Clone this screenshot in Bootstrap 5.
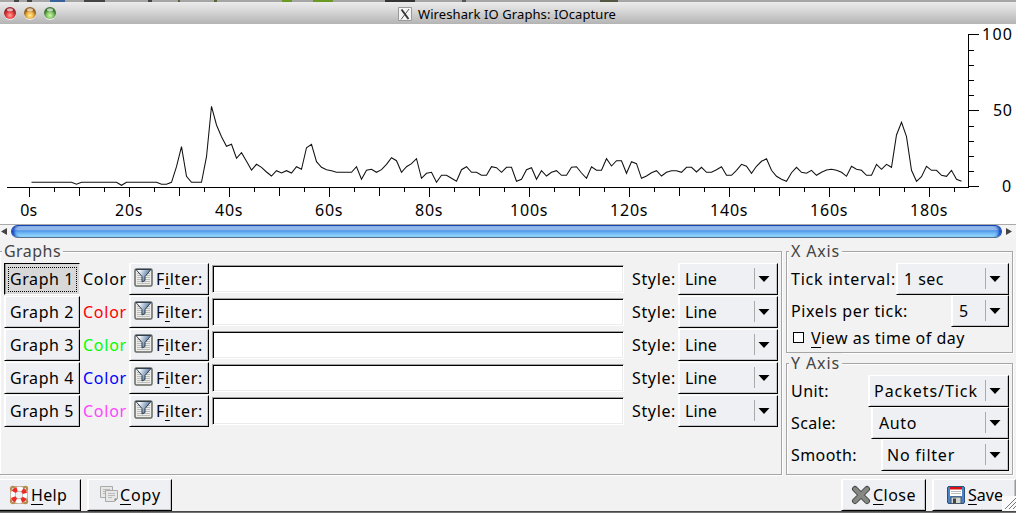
<!DOCTYPE html>
<html lang="en">
<head>
<meta charset="utf-8">
<title>Wireshark IO Graphs: IOcapture</title>
<link rel="stylesheet" href="https://cdn.jsdelivr.net/npm/bootstrap@5.3.0/dist/css/bootstrap.min.css">
<style>
body{width:1016px;height:513px;overflow:hidden;background:#f2f2f2;color:#000;font:16px/20px "Noto Sans","Open Sans",sans-serif}
.strip{height:2px;background:linear-gradient(90deg,#a6a6a6 0 14px,#444 14px 19px,#a6a6a6 19px 27px,#444 27px 32px,#a6a6a6 32px 50px,#38629c 50px 65px,#a6a6a6 65px 84px,#444 84px 105px,#a6a6a6 105px 148px,#444 148px 152px,#a6a6a6 152px 178px,#563 178px 180px,#a6a6a6 180px 214px,#563 214px 217px,#a6a6a6 217px 282px,#6a9a22 282px 292px,#a6a6a6 292px 313px,#6a9a22 313px 333px,#a6a6a6 333px 385px,#333 385px 415px,#a6a6a6 415px 462px,#555 462px 466px,#a6a6a6 466px 600px,#554 600px 618px,#a6a6a6 618px)}
.titlebar{height:22px;background:linear-gradient(#ececec,#d4d4d4 45%,#b4b4b4);font-size:13px}
.lights{position:absolute;left:3px;top:4px}
.thumb-bar{height:14px;background:#f4f4f4;border-top:1px solid #aaa}
.thumb{width:991px;height:13px;border-radius:7px;border:1px solid #1746b4;border-bottom-color:#55708c;background:linear-gradient(#93b9ea 0 38%,#4c92e8 42%,#6db4f4 62%,#9be0ff);box-shadow:inset 4px 0 3px -2px #0b3cb8,inset -4px 0 3px -2px #0b3cb8}
.pane{height:236px}
.group{position:relative;border:1px solid #a5a5a5;box-shadow:1px 1px #fff,inset 1px 1px #fff}
.group-name{position:absolute;left:2px;top:-11px;height:20px;padding:0 2px;background:#f2f2f2;color:#444}
.graphs{width:782px;height:224px;margin-top:13px;border-left:0;padding:11px 0 0 4px}
.graphs .group-name{left:2px}
.side{width:227px;margin:13px 0 0 4px}
.xaxis{height:102px;padding:11px 0 0 4px}
.yaxis{height:112px;margin-top:10px;padding:11px 0 0 4px}
.key{height:32px;background:#eff0f3;border:solid;border-width:1px;border-color:#fff #000 #000 #fff;box-shadow:inset 1px 0 #fff,inset -1px -1px #c4c6ca;white-space:nowrap}
.key.down{background:#d8d8d8;border-color:#000 #eee #fff #000;box-shadow:inset 1px 0 #999}
.focusbox{border:1px dotted #000;width:69px;height:25px}
.graph-row{display:grid;grid-template-columns:76px 49px 80px 3px 412px 54px 100px;height:33px}
.entry{height:28px;margin-top:2px;border:solid;border-width:1px;border-color:#a0a0a0 #fff #fff #a0a0a0;background:#fff;box-shadow:inset 1px 1px #000,inset -1px -1px #ececec}
.pick{position:relative;padding:5px 0 0 7px}
.pick svg{position:absolute;right:7px;top:4px}
.field-row{height:32px;padding-right:3px}
.check{width:11px;height:11px;border:1px solid #000;background:#fff}
.fit{display:inline-block;white-space:pre;text-align:left;line-height:20px}
u{text-underline-offset:3px;text-decoration-thickness:1px}
.actions{height:37px;padding-top:5px}
.grip{position:absolute;right:0;bottom:2px}
.floor{height:2px;background:linear-gradient(#333,#888)}
</style>
</head>
<body class="d-flex flex-column position-relative">
<div class="strip flex-shrink-0"></div>
<header class="titlebar position-relative flex-shrink-0">
<svg class="lights" width="60" height="16"><defs>
<radialGradient id="r" cy=".7"><stop stop-color="#ffa9a5"/><stop offset=".55" stop-color="#f04748"/><stop offset="1" stop-color="#97272c"/></radialGradient>
<radialGradient id="y" cy=".7"><stop stop-color="#fff29a"/><stop offset=".55" stop-color="#f2b447"/><stop offset="1" stop-color="#93601f"/></radialGradient>
<radialGradient id="g" cy=".7"><stop stop-color="#d4f7a8"/><stop offset=".55" stop-color="#86c96a"/><stop offset="1" stop-color="#3c7631"/></radialGradient></defs>
<g fill="#eee"><circle cx="7" cy="8" r="6"/><circle cx="27" cy="8" r="6"/><circle cx="47" cy="8" r="6"/></g>
<circle cx="7" cy="7" r="6" fill="url(#r)"/><circle cx="27" cy="7" r="6" fill="url(#y)"/><circle cx="47" cy="7" r="6" fill="url(#g)"/>
<g fill="#fff" opacity=".65"><ellipse cx="7" cy="3.7" rx="3" ry="1.5"/><ellipse cx="27" cy="3.7" rx="3" ry="1.5"/><ellipse cx="47" cy="3.7" rx="3" ry="1.5"/></g></svg>
<div class="d-flex align-items-center h-100" style="padding-left:398px;padding-top:1px">
<svg width="14" height="14"><path d="M.5.5h13v13H.5z" fill="#f5f5f5" stroke="#999"/><path d="M3.500 2.500 10.500 12" stroke="#333" stroke-width="1.900"/><path d="M11 2 3 12.500" stroke="#444" stroke-width=".9"/></svg>
<span class="fit" data-w="198" style="margin-left:6px">Wireshark IO Graphs: IOcapture</span></div>
</header>
<svg id="chart" class="bg-white flex-shrink-0" width="1016" height="200" viewBox="0 24 1016 200"></svg>
<div class="thumb-bar d-flex align-items-center flex-shrink-0"><svg width="11" height="13"><path d="M7 3v7L1 6.500z" fill="#444"/></svg><div class="thumb"></div><svg width="14" height="13"><path d="M4 3v7l6-3.500z" fill="#444"/></svg></div>
<main class="pane d-flex flex-shrink-0">
<section class="group graphs"><div class="group-name"><span class="fit" data-w="57">Graphs</span></div><div id="rows"></div></section>
<aside class="side">
<section class="group xaxis"><div class="group-name"><span class="fit" data-w="49">X Axis</span></div>
<div class="field-row d-flex justify-content-between align-items-center"><span class="fit" data-w="105">Tick interval:</span><div class="key pick" data-pick="1 sec" data-width="113" data-w="40"></div></div>
<div class="field-row d-flex justify-content-between align-items-center"><span class="fit" data-w="117">Pixels per tick:</span><div class="key pick" data-pick="5" data-width="58" data-w="9"></div></div>
<label class="d-flex align-items-center" style="padding-left:2px;height:21px"><span class="check"></span><span class="fit" data-w="154" style="margin-left:7px"><u>V</u>iew as time of day</span></label>
</section>
<section class="group yaxis"><div class="group-name"><span class="fit" data-w="49">Y Axis</span></div>
<div class="field-row d-flex justify-content-between align-items-center"><span class="fit" data-w="38">Unit:</span><div class="key pick" data-pick="Packets/Tick" data-width="141" data-w="104" style="padding-left:5px"></div></div>
<div class="field-row d-flex justify-content-between align-items-center"><span class="fit" data-w="45">Scale:</span><div class="key pick" data-pick="Auto" data-width="138" data-w="38"></div></div>
<div class="field-row d-flex justify-content-between align-items-center"><span class="fit" data-w="66">Smooth:</span><div class="key pick" data-pick="No filter" data-width="128" data-w="68" style="padding-left:5px"></div></div>
</section>
</aside>
</main>
<footer class="actions d-flex flex-shrink-0">
<div class="key d-flex align-items-center" style="width:83px;margin-left:-2px;padding-left:10px">
<svg width="20" height="20"><g fill="none" stroke="#b48b4c" stroke-width="1.300"><rect x="2" y="2" width="16" height="16" rx="3"/><circle cx="3.500" cy="3.500" r="2"/><circle cx="16.500" cy="3.500" r="2"/><circle cx="3.500" cy="16.500" r="2"/><circle cx="16.500" cy="16.500" r="2"/></g><circle cx="10" cy="10" r="6" fill="#f2f2f2" stroke="#bbb" stroke-width="5.500"/><circle cx="10" cy="10" r="6.200" fill="none" stroke="#fff" stroke-width="4"/><circle cx="10" cy="10" r="6.200" fill="none" stroke="#ed2a24" stroke-width="4.500" stroke-dasharray="4.200 5.539" stroke-dashoffset="-2.800"/></svg>
<span class="fit" data-w="36" style="margin-left:2px"><u>H</u>elp</span></div>
<div class="key d-flex align-items-center" style="width:85px;margin-left:6px;padding-left:11px">
<svg width="20" height="20"><g fill="#e7e7e5" stroke="#aaa"><path d="M1.500 1.500h12v11h-12z"/><path d="M6.500 5.500h12v8l-3 3h-9z"/></g><path d="M4 4.500h7M4 6.500h2M4 8.500h2M9 8.500h7M9 10.500h7M9 12.500h4" stroke="#bbb"/><path d="m18.500 13.500-3 3v-3z" fill="#888"/></svg>
<span class="fit" data-w="41" style="margin-left:1px"><u>C</u>opy</span></div>
<div class="key d-flex align-items-center" style="width:85px;margin-left:669px;padding-left:9px">
<svg width="20" height="20"><path d="m4 4 12 12M16 4 4 16" stroke="#444744" stroke-width="6" stroke-linecap="round"/><path d="m4 4 12 12M16 4 4 16" stroke="#858882" stroke-width="4" stroke-linecap="round"/></svg>
<span class="fit" data-w="43" style="margin-left:2px"><u>C</u>lose</span></div>
<div class="key d-flex align-items-center" style="width:84px;margin-left:6px;padding-left:13px;border-right-color:#999">
<svg width="20" height="20"><rect x="1.500" y="1.500" width="17" height="17" rx="1.500" fill="#4d82c4" stroke="#2c5080"/><path d="M4 2h12v9H4z" fill="#fff"/><path d="M4 2h12v2.500H4z" fill="#d81010"/><path d="M5 6.500h10M5 8.500h10" stroke="#bbb"/><path d="M5 12h10v6.500H5z" fill="#d4d6d2" stroke="#456"/><path d="M7 13.500h3V18H7z" fill="#444"/></svg>
<span class="fit" data-w="35" style="margin-left:2px"><u>S</u>ave</span></div>
<svg class="grip" width="14" height="15"><path d="M0 0h14v15H0z" fill="#fafafa"/><path d="M3 13 14 2M7 13l7-7M11 13l3-3" stroke="#777"/></svg>
</footer>
<div class="floor flex-shrink-0"></div>
<script>
const caret = '<svg width="16" height="22"><path d="M.5 0v21" stroke="#aaa"/><path d="M4.500 8h11l-5.500 6z"/></svg>';
document.querySelectorAll('.pick').forEach(p => {
  p.style.width = p.dataset.width + 'px';
  p.innerHTML = `<span class="fit" data-w="${p.dataset.w}">${p.dataset.pick}</span>${caret}`;
  p.removeAttribute('data-w');
});
const funnel = '<svg width="19" height="19"><defs><linearGradient id="f" x2="1" y2=".4"><stop offset=".2" stop-color="#fff"/><stop offset="1" stop-color="#3d6594"/></linearGradient></defs><rect x="1" y="1" width="17" height="17" rx="1.500" fill="#ececea" stroke="#666862" stroke-width="1.500"/><path d="M3 5.500h13M3 7.500h13M3 9.500h13M3 11.500h13M3 13.500h13M3 15.500h13" stroke="#bcbcba"/><path d="M2 1.500h15L11 8.500v4l-3 1.500V8.500z" fill="url(#f)" stroke="#2f3f50"/></svg>';
document.getElementById('rows').innerHTML = ['#000', '#f00', '#0f0', '#00f', '#f4f'].map((c, i) => {
  const name = `<span class="fit" data-w="64">Graph ${i + 1}</span>`;
  return `<div class="graph-row"><div class="key d-flex align-items-center justify-content-center ${i ? '' : 'down'}">${i ? name : `<span class="focusbox d-flex align-items-center justify-content-center">${name}</span>`}</div>
  <div style="color:${c};padding:6px 0 0 3px"><span class="fit" data-w="44">Color</span></div>
  <div class="key d-flex align-items-center" style="padding:0 0 0 4px"><span class="d-flex pb-1">${funnel}</span><span class="fit" data-w="47" style="margin-left:3px">F<u>i</u>lter:</span></div><i></i>
  <div class="entry"></div><div style="padding:6px 0 0 8px"><span class="fit" data-w="44">Style:</span></div>
  <div class="key pick" style="padding-left:6px"><span class="fit" data-w="32">Line</span>${caret}</div></div>`;
}).join('');

// Samples are five pixels apart, heights in thirds of a pixel from the chart's top.
const flat = (n, v) => Array(n).fill(v);
const lower = [150,133,142,156,168,152,159,152,159,140,148,83,73,125,142,149,152,157,157,157,157,140,178,151,148,157,149,133,113,122,157,140,131,116,175,160,157,187,166,166,175,184,149,140,157,157,166,166,140,143,
 157,142,142,184,178,149,143,178,152,168,157,152,166,166,142,140,159,175,140,151,151,116,138,122,122,160,125,131,175,168,158,152,168,157,152,152,157,142,142,156,142,157,157,149,140,166,166,151,133,139];
const tail = [220,199,184,176,211,229,238,244,218,202,217,220,211,226,217,210,208,211,217,229,199,208,211,226,226,193,208,193,202,105,67,110,211,244,230,199,211,211,226,229,211,238,244];
const ys = [...flat(9,277),283,...flat(8,277),286,...flat(7,277),283,283,277,230,170,259,277,277,277,200,49,105,140,169,163,205,188,214,...lower.map(v => v + 90),...tail.map(v => v + 30)];
let out = `<polyline fill="none" stroke="#111" stroke-width="1.050" points="${ys.map((v, i) => (31.5 + 5 * i) + ',' + (90 + v / 3).toFixed(1)).join(' ')}"/><g stroke="#000" shape-rendering="crispEdges"><path d="M7 187.500H969M968.500 34V187"/>`;
for (let i = 0; i < 38; i++) out += `<path d="M${29.5 + 25 * i} 187V${i % 4 == 0 ? 197 : i % 2 == 0 ? 196 : 192}"/>`;
[34.5,50.5,65.5,80.5,95.5,110.5,126.5,141.5,156.5,171.5,186.5].forEach((y, i) => out += `<path d="M968 ${y}H${i % 5 ? 974 : 979}"/>`);
out += '</g>';
for (let i = 0; i < 10; i++) out += `<text x="${[20.2,115,215,315,415,510,610,710,810,910][i]}" y="216" textLength="${[17,27.5,27.5,27.5,27.5,37.500][Math.min(i,5)]}">${20 * i}s</text>`;
out += '<text x="982" y="40" textLength="30">100</text><text x="993" y="116" textLength="19">50</text><text x="1002" y="192" textLength="10">0</text>';
document.getElementById('chart').innerHTML = out;

// Spread each label's letters over its nominal width.
document.querySelectorAll('.fit').forEach(e => {
  const w = +e.dataset.w, n = e.textContent.length;
  e.style.letterSpacing = ((w - e.getBoundingClientRect().width) / n).toFixed(3) + 'px';
});
</script>
<script src="https://cdn.jsdelivr.net/npm/bootstrap@5.3.0/dist/js/bootstrap.bundle.min.js"></script>
</body>
</html>
